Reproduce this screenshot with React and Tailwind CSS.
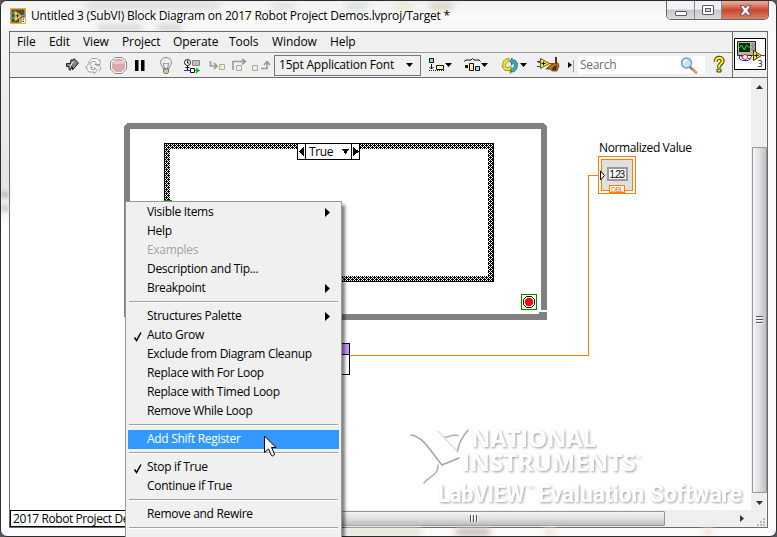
import React from "react";

const menus = [
  ["File", "w-[32px]"],
  ["Edit", "w-[34px]"],
  ["View", "w-[39px]"],
  ["Project", "w-[51px]"],
  ["Operate", "w-[56px]"],
  ["Tools", "w-[43px]"],
  ["Window", "w-[58px]"],
  ["Help", "w-[40px]"],
];

const contextItems = [
  { label: "Visible Items", sub: true },
  { label: "Help" },
  { label: "Examples", disabled: true },
  { label: "Description and Tip..." },
  { label: "Breakpoint", sub: true },
  null,
  { label: "Structures Palette", sub: true },
  { label: "Auto Grow", checked: true },
  { label: "Exclude from Diagram Cleanup" },
  { label: "Replace with For Loop" },
  { label: "Replace with Timed Loop" },
  { label: "Remove While Loop" },
  null,
  { label: "Add Shift Register", active: true },
  null,
  { label: "Stop if True", checked: true },
  { label: "Continue if True" },
  null,
  { label: "Remove and Rewire" },
  null,
  { label: "" },
];

/* Every toolbar glyph shares one coordinate system, so each takes its own slice of it. */
function Glyph({ x, w, children }) {
  return (
    <svg className="block shrink-0" width={w} height={24} viewBox={`${x} 53 ${w} 24`}>
      {children}
    </svg>
  );
}

function TitleBar() {
  return (
    <div className="relative flex h-[30px] shrink-0 items-start overflow-hidden bg-linear-to-b from-[#f1f1f1] via-[#fbfbfb] to-[#f6f6f6]">
      <div className="absolute left-[84px] top-[1px] h-[7px] w-[136px] rounded-full bg-[#d6d6d6] blur-[4px]" />
      <div className="absolute left-[96px] top-[24px] h-[5px] w-[46px] rounded-full bg-[#cccccc] blur-[3px]" />
      <div className="absolute left-[156px] top-[24px] h-[5px] w-[25px] rounded-full bg-[#c6c6c6] blur-[3px]" />
      <div className="absolute left-[270px] top-[2px] h-[7px] w-[24px] rounded-full bg-[#dedede] blur-[3px]" />
      <div className="absolute left-[345px] top-[2px] h-[7px] w-[22px] rounded-full bg-[#d9dcdc] blur-[3px]" />
      <div className="absolute left-[392px] top-[2px] h-[6px] w-[20px] rounded-full bg-[#e5e6c4] blur-[3px]" />
      <div className="absolute left-[428px] top-[1px] h-[8px] w-[24px] rounded-full bg-[#ddd2c2] blur-[3px]" />
      <svg className="relative ml-[9px] mt-[7px] block shrink-0" width="16" height="16" viewBox="0 0 16 16">
        <rect x=".75" y=".75" width="14.5" height="14.5" fill="#4b4e50" stroke="#f0b016" strokeWidth="1.5" />
        <path d="M0 5h5M0 10h5M12 7.5h4" stroke="#4aa4d8" strokeWidth="1.6" />
        <path d="M4.5 2.5v11L12.5 8z" fill="#f7d84e" stroke="#8a6a10" strokeWidth=".6" />
        <path d="M5.5 7.8h4M7.5 5.8v4" stroke="#333" />
        <path d="M10 10.5v4M12 10h2.5v4.5H12zM12 12.2h2.5" fill="none" stroke="#fff" />
      </svg>
      <div className="relative ml-[5px] mt-[6px] whitespace-nowrap text-[12px] leading-[18px] tracking-[-0.21px] text-black">
        Untitled 3 (SubVI) Block Diagram on 2017 Robot Project Demos.lvproj/Target *
      </div>
      <div className="relative ml-auto mr-[7px] flex h-[19px] w-[103px] shrink-0 overflow-hidden rounded-b-[5px] border border-t-0 border-[#63656b]">
        <div className="flex w-[28px] items-center justify-center border-r border-[#85878c] bg-linear-to-b from-[#f1f2f3] from-45% via-[#c4c6ca] via-50% to-[#dcdde0]">
          <span className="mt-[6px] h-[5px] w-[12px] rounded-[1px] border border-[#555a69] bg-white" />
        </div>
        <div className="flex w-[27px] items-center justify-center border-r border-[#85878c] bg-linear-to-b from-[#f1f2f3] from-45% via-[#c4c6ca] via-50% to-[#dcdde0]">
          <span className="flex h-[10px] w-[12px] items-center justify-center rounded-[1px] border border-[#555a69] bg-white">
            <span className="h-[4px] w-[6px] border border-[#555a69] bg-[#d5d7da]" />
          </span>
        </div>
        <div className="flex flex-1 items-center justify-center bg-linear-to-b from-[#e9a899] from-5% via-[#c9452d] via-50% to-[#d98068]">
          <svg width="13" height="11" viewBox="0 0 13 11">
            <path d="M1 .7h3.5l2 2.4 2-2.4H12L8.6 5.4 12 10.2H8.5l-2-2.5-2 2.5H1l3.4-4.8z" fill="#fff" stroke="#605460" strokeWidth="1" />
          </svg>
        </div>
      </div>
    </div>
  );
}

function ToolBar() {
  return (
    <div className="flex h-[24px] items-center overflow-hidden bg-[#f0f0f0]">
      <Glyph x={10} w={72}>
        <path d="M66.500 63.500h4v-3l1-1 3.500 3.500-5 7.500-1-1v-3h-2.500z" fill="#858585" stroke="#222" />
        <path d="M73 62l-1-2h2v-1.500l4.500 4.500-6 7v-3h-1.500z" fill="#858585" stroke="#222" />
        <path d="M73.500 61l-3.500 6" stroke="#f4f4f4" strokeWidth="1.200" />
      </Glyph>
      <Glyph x={82} w={24}>
        <g fill="#fafafa" stroke="#a0a0a0">
          <path d="M88.500 62.500l3-4h5l2 2 1.500-1v5h-5l1.500-1.500-1.500-1.500h-3l-1 2z" />
          <path d="M85.500 67.500l3.500-4 3.500 4h-2l1 2h3v-2l2.500 3-2.500 3v-1.500h-5.500l-2-2.500v-2z" />
          <path d="M96.500 65.500h3l1.500 2.500-2 3" fill="none" />
        </g>
      </Glyph>
      <Glyph x={106} w={24}>
        <path d="M115 57.500h7l4.500 4.500v7l-4.500 4.500h-7l-4.500-4.500v-7z" fill="#fff" stroke="#858585" />
        <path d="M115.500 59h6l3.500 3.500v6l-3.500 3.500h-6l-3.500-3.500v-6z" fill="#dca9ab" />
        <path d="M113 61h11v3h-11z" fill="#e9c8ca" />
      </Glyph>
      <Glyph x={130} w={24}>
        <path d="M135 60h3.500v11h-3.500zM141 60h3.500v11h-3.500z" fill="#000" />
      </Glyph>
      <Glyph x={154} w={26}>
        <path d="M163 68.500c0-2-2.500-3-2.500-6a5.500 5 0 0 1 11 0c0 3-2.500 4-2.500 6z" fill="#eeeeee" stroke="#8c8c8c" />
        <path d="M164.500 68l-1.500-5 2 1 1-1 1 1 2-1-1.500 5" fill="none" stroke="#999" />
        <path d="M163.500 69h5v3l-1 1.500h-3l-1-1.500z" fill="#d5cd90" stroke="#777" />
      </Glyph>
      <Glyph x={180} w={25}>
        <circle cx="187.500" cy="62.500" r="3" fill="#fff" stroke="#111" />
        <path d="M187.500 60.500v2.500h1.500M187.500 66v4M185.500 67.500h4" stroke="#111" fill="none" />
        <path d="M192.500 60.500h7v5h-7z" fill="#bbb" stroke="#888" />
        <path d="M184 70.500h12" stroke="#1638e8" />
        <path d="M190.500 68.500h4v4h-4z" fill="#fff" stroke="#111" />
        <path d="M195 70.500h2" stroke="#00b818" />
        <path d="M196 67.500l4 3-4 3z" fill="#00b818" />
      </Glyph>
      <Glyph x={205} w={25}>
        <path d="M210.500 61v5h6M214 63l3 3-3 3" fill="none" stroke="#999" strokeWidth="1.600" />
        <path d="M219.500 64.500h5v5h-5z" fill="#f3f0c8" stroke="#aaa" />
      </Glyph>
      <Glyph x={230} w={19}>
        <path d="M233 70v-8.500h12M242 59l3.500 2.500-3.500 3" fill="none" stroke="#999" strokeWidth="1.600" />
        <path d="M236.500 65.500h5v5h-5z" fill="#f3f0c8" stroke="#aaa" />
      </Glyph>
      <Glyph x={249} w={25}>
        <path d="M252.500 65.500h5v5h-5z" fill="#f3f0c8" stroke="#aaa" />
        <path d="M261 68.500h6v-6M264 65l3-3.500 3 3.500" fill="none" stroke="#999" strokeWidth="1.600" />
      </Glyph>
      <div className="flex h-[21px] w-[147px] shrink-0 items-center justify-between border border-[#70777d] bg-[#f0f0f0] pl-[4px] pr-[7px]">
        <span className="whitespace-nowrap pb-px text-[12px] leading-[18px] tracking-[-0.2px]">15pt Application Font</span>
        <svg width="7" height="4" viewBox="0 0 7 4"><path d="M0 0h7L3.500 4z" /></svg>
      </div>
      <Glyph x={421} w={37}>
        <path d="M429.500 58.500h4v4h-4z" fill="#7fe3ee" stroke="#111" />
        <path d="M431.500 64v5M429.500 67l2 2 2-2" stroke="#111" fill="none" />
        <path d="M429 70.500h16" stroke="#111" strokeDasharray="1 1" />
        <path d="M436.500 65.500h7v4h-7z" fill="#fff3a0" stroke="#111" />
        <path d="M445 63h7l-3.500 4z" />
      </Glyph>
      <Glyph x={458} w={36}>
        <path d="M464 61.500l2-1.500h5l1.500-1.500L474 60h5l1.500 1.500" fill="none" stroke="#111" />
        <path d="M465 65h3v3h-3z" fill="#111" />
        <path d="M469.500 63.500h4v7h-4z" fill="#fff3a0" stroke="#111" />
        <path d="M475.500 66.500h4v4h-4z" fill="#7fe3ee" stroke="#111" />
        <path d="M481 63h7l-3.500 4z" />
      </Glyph>
      <Glyph x={494} w={36}>
        <path d="M509 58.500c-5 0-7 4-6 8h-1l3 4h5v3l1-1v-7l-2 2h-3c-1-3 0-5 3-6z" fill="#f0e22d" stroke="#8d831b" strokeWidth=".8" />
        <path d="M511 72c5 0 7-4 6-8h1l-3-4h-3v-2l-2 3 2 4v-2h2c1 3 0 5-3 6z" fill="#37afc1" stroke="#176473" strokeWidth=".8" />
        <path d="M520 63h7l-3.500 4z" />
      </Glyph>
      <Glyph x={530} w={34}>
        <path d="M537 61.500h4M537 66.500h4" stroke="#1c35e4" />
        <path d="M538 62.500h3M548 63.500h6" stroke="#ee1c1c" />
        <path d="M555 57h2v7h-2z" fill="#55330b" />
        <path d="M551 64.500l7-1.500 1 3-2 5h-5l-2-2h-4l3-3z" fill="#a87524" stroke="#5e3d0c" strokeWidth=".8" />
        <path d="M553 67l4-2-1 5h-4z" fill="#4d300a" />
        <path d="M540.500 58.500v10l9-5z" fill="#fff100" stroke="#555" />
        <path d="M541.500 63.500h4M543.500 61.500v4" stroke="#111" />
      </Glyph>
      <Glyph x={564} w={14}>
        <path d="M568 62l4 3-4 3z" />
        <path d="M573.500 60v12" stroke="#999" />
      </Glyph>
      <div className="flex h-[18px] w-[127px] shrink-0 items-center justify-between bg-white pl-[2px] pr-[7px]">
        <span className="text-[12px] leading-[18px] tracking-[-0.3px] text-[#6d6d6d]">Search</span>
        <svg width="18" height="17" viewBox="0 0 18 17">
          <path d="M10.500 10.500l5.500 5" stroke="#d49d62" strokeWidth="3" strokeLinecap="round" />
          <path d="M9.500 9.500l3 3" stroke="#6e7b86" strokeWidth="1.500" />
          <circle cx="6.500" cy="6" r="5" fill="#b8ebfb" stroke="#7898ba" strokeWidth="1.400" />
          <path d="M4 6c0-2 1-3 3-3" stroke="#fff" strokeWidth="1.500" fill="none" />
        </svg>
      </div>
      <Glyph x={705} w={25}>
        <path d="M715.500 62c0-6 8-5 7-.500-.500 2-3.500 2.500-3.500 6" fill="none" stroke="#333" strokeWidth="4" />
        <path d="M717 69h4v3h-4z" fill="#fff100" stroke="#333" />
        <path d="M715.500 62c0-6 8-5 7-.500-.500 2-3.500 2.500-3.500 5.500" fill="none" stroke="#fff100" strokeWidth="2.200" />
      </Glyph>
    </div>
  );
}

function ViIcon() {
  return (
    <div className="flex w-[35px] shrink-0 justify-center border-l border-[#6b6b6b] bg-[#f0f0f0] pt-[6px]">
      <svg className="block" width="32" height="32" viewBox="0 0 32 32">
        <path d="M.5.500h31v31H.500z" fill="#fff" stroke="#000" />
        <path d="M3.500 3.500h18v14h-18z" fill="#b8b89c" stroke="#222" />
        <path d="M5 5h11v9H5z" fill="#062c0b" />
        <path d="M5.500 10l2-3 3 5 2-5 3 3" fill="none" stroke="#22dd3c" />
        <path d="M18 6h2v2h-2zM18 10h2v2h-2z" fill="#fff" stroke="#333" strokeWidth=".6" />
        <path d="M5.500 18v3l3 1.500h6l3-2.500" stroke="#1c35e4" fill="none" />
        <path d="M7 18l2 3 3-3 3 3 4-4M26 17.500h5" fill="none" stroke="#e41c1c" />
        <circle cx="11" cy="19" r="2.500" fill="#fff" stroke="#c33" />
        <path d="M19.500 12.500v10l8-5z" fill="#fff100" stroke="#333" />
        <path d="M20.500 17.500h4M22.500 15.500v4" stroke="#111" />
        <text x="23.500" y="29" fontSize="9" fontFamily="Open Sans, sans-serif">3</text>
      </svg>
    </div>
  );
}

const logoType = { fontFamily: "Open Sans, Noto Sans, sans-serif", fontWeight: 700 };
const productType = { fontFamily: "Liberation Sans Narrow, Roboto, Liberation Sans, sans-serif", fontWeight: 700 };

function Diagram() {
  return (
    <svg className="block" width="741" height="432" viewBox="10 78 741 432">
      <defs>
        <pattern id="weave" x="0" y="0" width="4" height="4" patternUnits="userSpaceOnUse">
          <rect width="4" height="4" fill="#fff" />
          <path d="M0 0h1v1H0zM2 0h1v1H2zM1 1h3v1H1zM0 2h1v1H0zM2 2h1v1H2zM0 3h2v1H0zM3 3h1v1H3z" fill="#000" shapeRendering="crispEdges" />
        </pattern>
        <filter id="emboss" x="-10%" y="-20%" width="120%" height="150%">
          <feDropShadow dx="1.100" dy="1.100" stdDeviation=".8" floodColor="#777" floodOpacity=".7" />
        </filter>
        <filter id="soften">
          <feGaussianBlur stdDeviation=".5" />
        </filter>
      </defs>

      {/* watermark */}
      <g filter="url(#soften)" fill="none" strokeLinecap="round">
        <path d="M411 435C424 437 431 452 442 465L459 458" stroke="#a6a6a6" strokeWidth="1.600" />
        <path d="M424 483C428 477 439 475 438 465" stroke="#b0b0b0" strokeWidth="1.500" />
        <path d="M445 437C448 438 450 434 458 435.500" stroke="#b0b0b0" strokeWidth="1.500" />
        <path d="M468 430C463 436 458 444 457.500 452" stroke="#a8a8a8" strokeWidth="1.500" />
        <path d="M438 431L458 452" stroke="#dddddd" strokeWidth="1.500" />
      </g>
      <g fill="#fff" filter="url(#emboss)">
        <text x="471" y="447" fontSize="23" textLength="125" lengthAdjust="spacingAndGlyphs" style={logoType}>NATIONAL</text>
        <text x="462" y="471" fontSize="23" textLength="174" lengthAdjust="spacingAndGlyphs" style={logoType}>INSTRUMENTS</text>
        <text x="636" y="460" fontSize="6" style={logoType}>™</text>
        <text x="438" y="501.500" fontSize="24" textLength="87" lengthAdjust="spacingAndGlyphs" style={productType}>LabVIEW</text>
        <text x="527" y="492" fontSize="10" style={productType}>™</text>
        <text x="538" y="501.500" fontSize="24" textLength="204" lengthAdjust="spacingAndGlyphs" style={productType}>Evaluation Software</text>
      </g>

      <g shapeRendering="crispEdges">
        {/* while loop */}
        <path d="M127 123h417v1h1v1h1v1h1v184h-6V129H130v185h409v-2h8v8H127v-3h-3V126h1v-1h1v-1h1z" fill="#808080" />
        {/* case structure */}
        <path d="M164 143h330v139H164z" fill="#000" />
        <path d="M165 144h328v137H165z" fill="url(#weave)" />
        <path d="M170 149h318v127H170z" fill="#fff" />
        <path d="M164 200h8v1h-8z" fill="#008000" />
        <path d="M297.500 143.500h62v16h-62zM305.500 143v17M351.500 143v17" fill="#fff" stroke="#000" />
        <path d="M304 147v9l-5-4.500zM353 147v9l6-4.500zM342 149h7l-3.500 5z" fill="#000" />
        {/* stop terminal */}
        <path d="M521.500 294.500h15v15h-15z" fill="#ffffcc" stroke="#008000" />
        {/* unbundle node */}
        <path d="M300.500 343.500h49v31h-49z" fill="#fff" stroke="#000" />
        <path d="M301 344h48v10h-48z" fill="#cc99ff" />
        <path d="M301 354h49v1h-49z" fill="#000" />
        {/* wire */}
        <path d="M350 355.500h238.500v-180H598" fill="none" stroke="#ff8000" />
        {/* indicator */}
        <path d="M598.500 156.500h37v37h-37z" fill="#fff" stroke="#ff8000" />
        <path d="M601.500 159.500h31v31h-31z" fill="#e0e0e0" stroke="#ff8000" />
        <path d="M607 167h21v14h-21z" fill="#999" />
        <path d="M609 169h17v10h-17z" fill="#fff" />
        <path d="M609.500 185.500h15v7h-15z" fill="#fff" stroke="#ff8000" />
      </g>
      <path d="M600.500 171v9l4-4.500z" fill="#fff" stroke="#000" />
      <path d="M526.500 296.500h5l3 3v5l-3 3h-5l-3-3v-5z" fill="#fff" stroke="#000" />
      <circle cx="529" cy="302" r="4.200" fill="#f00" />
      <g style={{ fontFamily: "Open Sans, Noto Sans, sans-serif" }} fontSize="12">
        <text x="309" y="156" textLength="24.500">True</text>
        <text x="599" y="152" textLength="93">Normalized Value</text>
      </g>
      <text x="609.500" y="178" fontSize="10" textLength="15.500" fontFamily="Liberation Sans">1.23</text>
      <text x="611" y="192" fontSize="7" textLength="12.500" fill="#f07000" fontFamily="Liberation Sans">DBL</text>
    </svg>
  );
}

function VerticalScroll() {
  return (
    <div className="flex w-[16px] shrink-0 flex-col items-center bg-[#efefef]">
      <div className="flex h-[69px] justify-center pt-[7px]">
        <svg width="7" height="4" viewBox="0 0 7 4"><path d="M0 4h7L3.500 0z" fill="#333" /></svg>
      </div>
      <div className="flex h-[346px] w-[15px] flex-col items-center justify-center gap-px rounded-[1px] border border-[#979797] bg-linear-to-r from-[#f5f5f5] via-[#dedfe1] to-[#bcbdc1]">
        <div className="h-[2px] w-[7px] border-b border-white bg-[#555]" />
        <div className="h-[2px] w-[7px] border-b border-white bg-[#555]" />
        <div className="h-[2px] w-[7px] border-b border-white bg-[#555]" />
      </div>
      <svg className="mt-[8px] shrink-0" width="7" height="4" viewBox="0 0 7 4"><path d="M0 0h7L3.500 4z" fill="#333" /></svg>
    </div>
  );
}

function BottomRow() {
  return (
    <div className="flex h-[17px] shrink-0 bg-[#efefef]">
      <div className="flex w-[272px] shrink-0 items-center overflow-hidden border border-black bg-white pl-[2px]">
        <span className="whitespace-nowrap text-[12px] leading-[15px] tracking-[-0.42px]">2017 Robot Project Demos.lvproj/Target</span>
      </div>
      <div className="mt-px flex h-[15px] w-[383px] shrink-0 items-center justify-center gap-[1px] rounded-[1px] border border-[#979797] bg-linear-to-b from-[#f5f5f5] via-[#dedfe1] to-[#bcbdc1]">
        <div className="h-[7px] w-[2px] border-r border-white bg-[#555]" />
        <div className="h-[7px] w-[2px] border-r border-white bg-[#555]" />
        <div className="h-[7px] w-[2px] border-r border-white bg-[#555]" />
      </div>
      <div className="flex flex-1 items-center justify-end pr-[7px]">
        <svg width="4" height="7" viewBox="0 0 4 7"><path d="M0 0v7l4-3.500z" fill="#333" /></svg>
      </div>
      <div className="flex w-[16px] items-end justify-end pb-px pr-[2px]">
        <svg width="9" height="9" viewBox="0 0 9 9"><path d="M7 1h2v2H7zM4 4h2v2H4zM7 4h2v2H7zM1 7h2v2H1zM4 7h2v2H4zM7 7h2v2H7z" fill="#bbb" /></svg>
      </div>
    </div>
  );
}

function ContextMenu() {
  return (
    <div className="absolute left-[125px] top-[201px] w-[217px] border border-[#979797] bg-[#f0f0f0] px-[2px] pt-px shadow-[3px_4px_3px_rgba(0,0,0,0.5)]">
      {contextItems.map((item, i) =>
        item === null ? (
          <div key={i} className="h-[9px] px-px pt-[3px]">
            <div className="h-[2px] border-b border-white bg-[#a0a0a0]" />
          </div>
        ) : (
          <div
            key={i}
            className={
              "flex h-[19px] items-center pr-[9px] " +
              (item.active ? "bg-[#3399ff] text-white" : item.disabled ? "text-[#a5a5a5]" : "text-black")
            }
          >
            <div className="w-[19px] shrink-0 pl-[6px] pt-[3px]">
              {item.checked && (
                <svg className="block" width="8" height="10" viewBox="0 0 8 10">
                  <path d="M.5 5.500l2 3L7 .5" fill="none" stroke="#000" strokeWidth="1.500" />
                </svg>
              )}
            </div>
            <span className="whitespace-nowrap pb-[2px] text-[12px] leading-[17px] tracking-[-0.31px]">{item.label}</span>
            {item.sub && (
              <svg className="ml-auto" width="5" height="9" viewBox="0 0 5 9"><path d="M0 0v9l5-4.500z" /></svg>
            )}
          </div>
        )
      )}
    </div>
  );
}

export default function App() {
  return (
    <div className="relative h-[537px] w-[777px] overflow-hidden bg-[#55565a] font-['Open_Sans','Noto_Sans',sans-serif] text-black">
      <div className="flex h-[537px] w-[777px] flex-col overflow-hidden rounded-[7px] border border-[#2c2c30] bg-[#fbfbfb]">
        <TitleBar />
        <div className="flex shrink-0">
          <div className="h-[497px] w-[8px] shrink-0 bg-linear-to-b from-[#f4f4f4] via-[#e4e4e4] via-30% to-white to-40%">
            <div className="h-[160px]" />
            <div className="h-[7px] bg-[#bcbcbc] blur-[2px]" />
            <div className="mt-[7px] h-[6px] bg-[#c8c8c8] blur-[2px]" />
          </div>
          <div className="flex h-[497px] w-[759px] shrink-0 flex-col border border-[#6b6b6b] bg-white">
            <div className="flex h-[46px] shrink-0 border-b border-[#6b6b6b]">
              <div className="flex w-[722px] flex-col">
                <div className="flex h-[21px] shrink-0 items-center border-b border-[#999] bg-[#f0f0f0] pl-[7px] text-[12px] leading-[18px] tracking-[-0.1px]">
                  {menus.map(([name, width]) => (
                    <div key={name} className={width}>{name}</div>
                  ))}
                </div>
                <ToolBar />
              </div>
              <ViIcon />
            </div>
            <div className="flex h-[432px] shrink-0">
              <Diagram />
              <VerticalScroll />
            </div>
            <BottomRow />
          </div>
        </div>
        <div className="flex h-[8px] pl-[345px]">
          <div className="h-[8px] w-[75px] bg-[#e3e3d4] blur-[3px]" />
          <div className="ml-[35px] h-[8px] w-[34px] bg-[#c9bdb8] blur-[3px]" />
          <div className="ml-[55px] h-[8px] w-[10px] bg-[#f6dfce] blur-[3px]" />
          <div className="ml-[148px] h-[8px] w-[9px] bg-[#f6e2d4] blur-[3px]" />
        </div>
      </div>
      <ContextMenu />
      <svg className="absolute left-[264px] top-[435px]" width="13" height="22" viewBox="0 0 13 22">
        <path d="M.5 1v16.500l4-3.500 3 6.500c.5 1 3.500 0 3-1.500L7.500 12.500H12z" fill="#fff" stroke="#000" />
      </svg>
    </div>
  );
}
